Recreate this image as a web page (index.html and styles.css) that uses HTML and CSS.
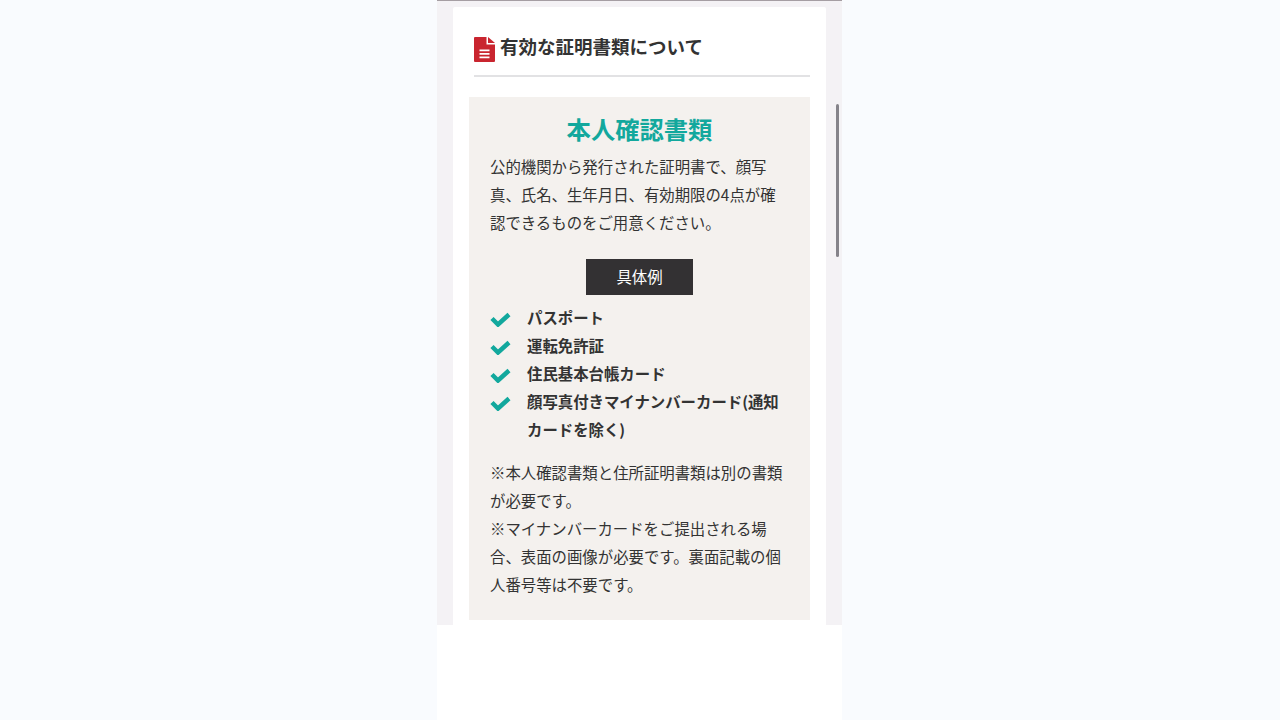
FILE: index.html
```html
<!DOCTYPE html>
<html lang="ja">
<head>
<meta charset="utf-8">
<title>有効な証明書類について</title>
<link rel="stylesheet" href="styles.css">
</head>
<body>
<div class="phone">
  <div class="screen">
    <main class="card">
      <h2 class="heading">
        <svg class="doc-icon" viewBox="0 0 21 25" aria-hidden="true">
          <path fill="#c9252f" d="M1 0h11.500v7.500H21V24a1 1 0 0 1-1 1H1a1 1 0 0 1-1-1V1a1 1 0 0 1 1-1z"/>
          <path fill="#c9252f" d="M14 0l7 6h-7z"/>
          <path fill="#fff" d="M5.500 12.500h10v1.700h-10zM5.500 16h10v1.700h-10zM5.500 19.500h10v1.700h-10z"/>
        </svg>
        <span>有効な証明書類について</span>
      </h2>
      <section class="panel">
        <h3 class="panel-title">本人確認書類</h3>
        <p class="text">公的機関から発行された証明書で、顔写真、氏名、生年月日、有効期限の4点が確認できるものをご用意ください。</p>
        <div class="tag-row"><span class="tag">具体例</span></div>
        <ul class="checks">
          <li><svg class="check" viewBox="0 0 21 15" aria-hidden="true"><path d="M2 6.500l6 6L19 2.500" fill="none" stroke="#12a89d" stroke-width="4.500"/></svg><span>パスポート</span></li>
          <li><svg class="check" viewBox="0 0 21 15" aria-hidden="true"><path d="M2 6.500l6 6L19 2.500" fill="none" stroke="#12a89d" stroke-width="4.500"/></svg><span>運転免許証</span></li>
          <li><svg class="check" viewBox="0 0 21 15" aria-hidden="true"><path d="M2 6.500l6 6L19 2.500" fill="none" stroke="#12a89d" stroke-width="4.500"/></svg><span>住民基本台帳カード</span></li>
          <li><svg class="check" viewBox="0 0 21 15" aria-hidden="true"><path d="M2 6.500l6 6L19 2.500" fill="none" stroke="#12a89d" stroke-width="4.500"/></svg><span>顔写真付きマイナンバーカード(通知カードを除く)</span></li>
        </ul>
        <p class="text">※本人確認書類と住所証明書類は別の書類が必要です。<br>※マイナンバーカードをご提出される場合、表面の画像が必要です。裏面記載の個人番号等は不要です。</p>
      </section>
    </main>
    <div class="scrollbar"></div>
  </div>
</div>
</body>
</html>
```
FILE: styles.css
```css
* { box-sizing: border-box; }
html, body { margin: 0; height: 720px; overflow: hidden; }
body {
  background: #f9fbfe;
  display: flex;
  justify-content: center;
  font-family: "Noto Sans CJK JP", "Noto Sans", sans-serif;
  color: #333;
}
.phone {
  width: 405px;
  height: 720px;
  margin-left: -1px;
  background: #fff;
}
.screen {
  position: relative;
  height: 625px;
  overflow: hidden;
  background: #f4f2f5;
  border-top: 1px solid #a59ea3;
  padding: 6px 16px 0;
}
.card {
  width: 373px;
  height: 640px;
  background: #fff;
  border-radius: 2px;
  padding: 28px 16px 0;
}
.heading {
  margin: 0 0 0 5px;
  height: 42px;
  display: flex;
  align-items: flex-start;
  gap: 5px;
  font-size: 18.500px;
  line-height: 22px;
  font-weight: 700;
  border-bottom: 2px solid #e2e2e4;
  color: #333;
}
.doc-icon { width: 21px; height: 25px; margin-top: 2px; flex: none; }
.panel {
  margin-top: 20px;
  background: #f4f1ee;
  height: 523px;
  padding: 14px 21px 0;
}
.panel-title {
  margin: 0;
  text-align: center;
  font-size: 24.300px;
  line-height: 36px;
  font-weight: 700;
  color: #12a89d;
}
.panel-title + .text { margin-top: 5px; }
.text {
  margin: 4px 0 0;
  font-size: 15.400px;
  line-height: 28px;
  color: #333;
}
.tag-row { display: flex; justify-content: center; margin-top: 23px; }
.tag {
  width: 107px;
  height: 36px;
  background: #333133;
  color: #fff;
  font-size: 15.400px;
  line-height: 34px;
  text-align: center;
}
.checks { list-style: none; margin: 8px 0 15px; padding: 0; }
.checks li {
  display: flex;
  gap: 16px;
  font-size: 15.400px;
  line-height: 28px;
  font-weight: 700;
}
.check { width: 21px; height: 15px; margin-top: 9px; flex: none; }
.scrollbar {
  position: absolute;
  right: 3px;
  top: 103px;
  width: 3px;
  height: 153px;
  border-radius: 2px;
  background: #85838a;
}
```
